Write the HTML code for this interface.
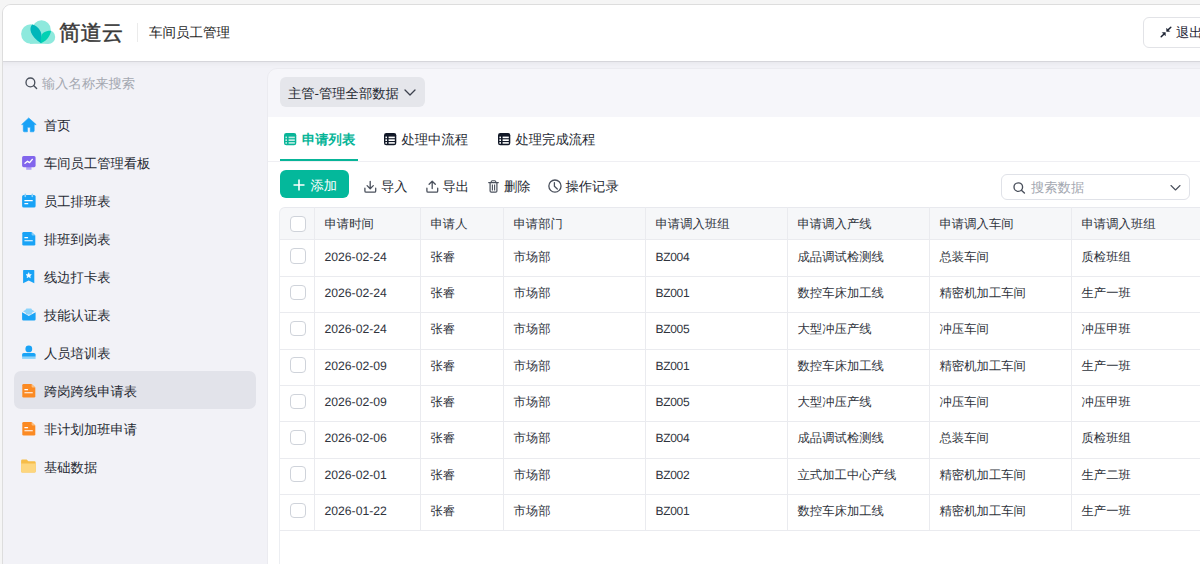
<!DOCTYPE html><html><head><meta charset="utf-8"><style>*{box-sizing:border-box;margin:0;padding:0}
html,body{width:1200px;height:564px;overflow:hidden;background:#f5f5f5;font-family:"Liberation Sans",sans-serif;color:#2a2f38;text-rendering:geometricPrecision}
.a{position:absolute}
.frame{position:absolute;left:2px;top:4px;width:1300px;height:700px;border:1px solid #dddddd;border-radius:9px;overflow:hidden;background:#f2f2f7}
.inner{position:absolute;left:-3px;top:-5px;width:1300px;height:700px}
.hdr{position:absolute;left:0;top:0;width:1300px;height:61px;background:#fff;box-shadow:0 1px 0 rgba(0,0,0,.075),0 2px 6px rgba(0,0,0,.06);z-index:3}
.side{position:absolute;left:0;top:61px;width:266px;height:700px;background:#f2f2f7}
.card{position:absolute;left:267px;top:68px;width:1100px;height:700px;background:#f6f6fa;border:1px solid #ebebf0;border-radius:10px}
.white{position:absolute;left:268px;top:117px;width:1100px;height:700px;background:#fff}
.tx{position:absolute;white-space:nowrap;line-height:20px}
.s13{font-size:13.3px}
.it{position:absolute;left:44px;font-size:13.3px;line-height:20px;color:#262a33;white-space:nowrap}
.ic{position:absolute;left:18px;width:22px;height:22px}
.tbl{position:absolute;left:0;top:0}
.thead{position:absolute;left:279px;top:207px;width:1000px;height:32px;background:#f6f7f9;border:1px solid #e8e9ee;border-left-color:#eceef2;border-bottom:none;border-top-left-radius:6px}
.hl{position:absolute;left:280px;width:1000px;height:1px;background:#eaebef}
.vl{position:absolute;width:1px;background:#eaebef}
.lb{position:absolute;left:279px;top:213px;width:1px;height:400px;background:#eceef2}
.cb{position:absolute;width:15.5px;height:15.5px;border:1px solid #cfd3da;border-radius:4px;background:#fff}
.th{font-size:12.35px;color:#30343d}
.td{font-size:12.35px;color:#30343d}
.num{letter-spacing:0;font-size:12.2px}
.bz{letter-spacing:-.3px;font-size:12px}
</style></head><body>
<div class="frame"><div class="inner">
 <div class="side"></div>
 <div class="card"></div>
 <div class="white"></div>
 
 <div class="hdr"></div>
</div></div>

<!-- header content -->
<svg class="a" style="left:18px;top:16px;z-index:5" width="40" height="32" viewBox="0 0 40 32">
  <circle cx="12.9" cy="18" r="9.8" fill="#8ee9dd"/>
  <circle cx="23.5" cy="13.5" r="9.2" fill="#8ee9dd"/>
  <circle cx="30.2" cy="21" r="7" fill="#8ee9dd"/>
  <rect x="12" y="17" width="18" height="10.8" fill="#8ee9dd"/>
  <path d="M14.2 8.5 C10.6 12 12 20 23 27.3 C23.8 22 23.8 18 22.6 15.6 C20.6 11.6 17.5 8.9 14.2 8.5 Z" fill="#00b6ba"/>
  <path d="M23 27.3 C22.5 23 22.8 19 25 17 C27 15.3 30 14.8 33 14.8 C32.5 19 29.5 24.5 23 27.3 Z" fill="#02d1b3"/>
</svg>
<div class="tx" style="left:59px;top:20px;font-size:21.4px;line-height:26px;color:#3a3a3a;-webkit-text-stroke:.45px #3a3a3a;z-index:5">简道云</div>
<div class="a" style="left:137px;top:23px;width:1px;height:19px;background:#ebebeb;z-index:5"></div>
<div class="tx s13" style="left:149px;top:23px;font-size:13.5px;color:#1f1f1f;z-index:5">车间员工管理</div>
<div class="a" style="left:1143px;top:17px;width:120px;height:31px;border:1px solid #e2e3e7;border-radius:6px;background:#fff;z-index:5"></div>
<svg class="a" style="left:1160px;top:26px;z-index:6" width="12" height="12" viewBox="0 0 12 12">
  <path d="M1.2 10.8 L3.8 8.2" stroke="#1c2333" stroke-width="1.5" stroke-linecap="round"/>
  <path d="M2.3 6.6 L5.4 6.6 L5.4 9.7 Z" fill="#1c2333" stroke="#1c2333" stroke-width=".5" stroke-linejoin="round"/>
  <path d="M10.8 1.2 L8.2 3.8" stroke="#1c2333" stroke-width="1.5" stroke-linecap="round"/>
  <path d="M6.6 2.3 L6.6 5.4 L9.7 5.4 Z" fill="#1c2333" stroke="#1c2333" stroke-width=".5" stroke-linejoin="round"/>
</svg>
<div class="tx s13" style="left:1176px;top:23px;color:#1c2333;z-index:6">退出</div>

<!-- sidebar -->
<svg class="a" style="left:25px;top:77px" width="13" height="13" viewBox="0 0 13 13">
  <circle cx="5.4" cy="5.4" r="4.4" fill="none" stroke="#4a505c" stroke-width="1.35"/>
  <path d="M8.6 8.6 L11.6 11.6" stroke="#4a505c" stroke-width="1.4" stroke-linecap="round"/>
</svg>
<div class="tx s13" style="left:42px;top:74px;color:#a4a8b1">输入名称来搜索</div>

<div class="a" style="left:14px;top:371px;width:242px;height:38px;background:#e2e3ea;border-radius:7px"></div>

<svg class="ic" style="top:114px" viewBox="0 0 22 22">
  <path d="M10.7 3.9 L18.2 10.6 L16.2 10.6 L16.2 16.8 Q16.2 17.8 15.2 17.8 L12.3 17.8 L12.3 13.3 L9.4 13.3 L9.4 17.8 L6.3 17.8 Q5.3 17.8 5.3 16.8 L5.3 10.6 L3.6 10.6 Z" fill="#1aa2f6" stroke="#1aa2f6" stroke-width=".6" stroke-linejoin="round"/>
</svg>
<div class="it" style="top:116px">首页</div>

<svg class="ic" style="top:152px" viewBox="0 0 22 22">
  <rect x="8.2" y="14.5" width="5.3" height="3.3" fill="#b3a3f7"/>
  <rect x="4.1" y="4.1" width="13.5" height="11.1" rx="1.6" fill="#8165ec"/>
  <path d="M7 11.3 L9.5 9.3 L11.6 10.6 L14.3 7.4" fill="none" stroke="#fff" stroke-width="1.4" stroke-linecap="round" stroke-linejoin="round"/>
</svg>
<div class="it" style="top:154px">车间员工管理看板</div>

<svg class="ic" style="top:190px" viewBox="0 0 22 22">
  <rect x="4.1" y="4.9" width="13.5" height="12.7" rx="1.6" fill="#19a3f6"/>
  <rect x="6.5" y="3.6" width="1.6" height="3.6" rx=".8" fill="#8fd3fb"/>
  <rect x="13.5" y="3.6" width="1.6" height="3.6" rx=".8" fill="#8fd3fb"/>
  <rect x="6.3" y="10.1" width="8.5" height="1.1" rx=".5" fill="#fff"/>
  <rect x="6.3" y="13.1" width="4" height="1.1" rx=".5" fill="#fff"/>
</svg>
<div class="it" style="top:192px">员工排班表</div>

<svg class="ic" style="top:228px" viewBox="0 0 22 22">
  <path d="M5.6 3.9 L13.6 3.9 L17.3 7.6 L17.3 16.3 Q17.3 17.6 16 17.6 L5.6 17.6 Q4.3 17.6 4.3 16.3 L4.3 5.2 Q4.3 3.9 5.6 3.9 Z" fill="#19a3f6"/>
  <path d="M13.6 3.9 L17.3 7.6 L14.6 7.6 Q13.6 7.6 13.6 6.6 Z" fill="#7fcdfb"/>
  <rect x="6.3" y="9.1" width="3.8" height="1.1" rx=".5" fill="#fff"/>
  <rect x="6.3" y="12.2" width="8.6" height="1.1" rx=".5" fill="#fff"/>
</svg>
<div class="it" style="top:230px">排班到岗表</div>

<svg class="ic" style="top:266px" viewBox="0 0 22 22">
  <path d="M5.1 4.6 Q5.1 3.9 5.8 3.9 L15.6 3.9 Q16.3 3.9 16.3 4.6 L16.3 17.2 L10.7 14.5 L5.1 17.2 Z" fill="#19a3f6"/>
  <path d="M10.7 6.6 L11.5 8.4 L13.4 8.6 L12 9.9 L12.4 11.8 L10.7 10.8 L9 11.8 L9.4 9.9 L8 8.6 L9.9 8.4 Z" fill="#fff" stroke="#fff" stroke-width=".5" stroke-linejoin="round"/>
</svg>
<div class="it" style="top:268px">线边打卡表</div>

<svg class="ic" style="top:304px" viewBox="0 0 22 22">
  <rect x="7.8" y="4.4" width="6" height="6" rx="1" fill="#8bd3fb"/>
  <path d="M4.1 8.3 L10.8 12 L17.6 8.3 L17.6 15.3 Q17.6 16.6 16.3 16.6 L5.4 16.6 Q4.1 16.6 4.1 15.3 Z" fill="#19a3f6"/>
  <path d="M5 7.2 L7.8 5.8 L13.8 5.8 L16.6 7.2 L10.8 10.6 Z" fill="#8bd3fb"/>
</svg>
<div class="it" style="top:306px">技能认证表</div>

<svg class="ic" style="top:342px" viewBox="0 0 22 22">
  <circle cx="10.8" cy="6.9" r="3.4" fill="#19a3f6"/>
  <path d="M4.1 12.6 Q4.1 10.9 5.8 10.9 L15.9 10.9 Q17.6 10.9 17.6 12.6 L17.6 14.8 L4.1 14.8 Z" fill="#19a3f6"/>
  <rect x="4.1" y="14.8" width="13.5" height="2.1" fill="#8bd3fb"/>
</svg>
<div class="it" style="top:344px">人员培训表</div>

<svg class="ic" style="top:380px" viewBox="0 0 22 22">
  <path d="M5.6 3.9 L13.6 3.9 L17.3 7.6 L17.3 16.3 Q17.3 17.6 16 17.6 L5.6 17.6 Q4.3 17.6 4.3 16.3 L4.3 5.2 Q4.3 3.9 5.6 3.9 Z" fill="#fb8a23"/>
  <path d="M13.6 3.9 L17.3 7.6 L14.6 7.6 Q13.6 7.6 13.6 6.6 Z" fill="#fdc080"/>
  <rect x="6.3" y="9.1" width="3.8" height="1.1" rx=".5" fill="#fff"/>
  <rect x="6.3" y="12.2" width="8.6" height="1.1" rx=".5" fill="#fff"/>
</svg>
<div class="it" style="top:382px">跨岗跨线申请表</div>

<svg class="ic" style="top:418px" viewBox="0 0 22 22">
  <path d="M5.6 3.9 L13.6 3.9 L17.3 7.6 L17.3 16.3 Q17.3 17.6 16 17.6 L5.6 17.6 Q4.3 17.6 4.3 16.3 L4.3 5.2 Q4.3 3.9 5.6 3.9 Z" fill="#fb8a23"/>
  <path d="M13.6 3.9 L17.3 7.6 L14.6 7.6 Q13.6 7.6 13.6 6.6 Z" fill="#fdc080"/>
  <rect x="6.3" y="9.1" width="3.8" height="1.1" rx=".5" fill="#fff"/>
  <rect x="6.3" y="12.2" width="8.6" height="1.1" rx=".5" fill="#fff"/>
</svg>
<div class="it" style="top:420px">非计划加班申请</div>

<svg class="ic" style="top:456px" viewBox="0 0 22 22">
  <path d="M4.4 3.5 L8.6 3.5 L10.4 5.2 L16.4 5.2 Q17.7 5.2 17.7 6.5 L17.7 15.2 Q17.7 16.5 16.4 16.5 L4.4 16.5 Q3.1 16.5 3.1 15.2 L3.1 4.8 Q3.1 3.5 4.4 3.5 Z" fill="#f6bd48"/>
  <path d="M3.1 7.6 L17.7 7.6 L17.7 15.2 Q17.7 16.5 16.4 16.5 L4.4 16.5 Q3.1 16.5 3.1 15.2 Z" fill="#fdd67e"/>
</svg>
<div class="it" style="top:458px">基础数据</div>

<!-- main top -->
<div class="a" style="left:280px;top:77px;width:145px;height:30px;background:#e5e6eb;border-radius:6px"></div>
<div class="tx s13" style="left:288px;top:84px;color:#262a33">主管-管理全部数据</div>
<svg class="a" style="left:404px;top:88px" width="12" height="9" viewBox="0 0 12 9">
  <path d="M1 2 L6 7 L11 2" fill="none" stroke="#3c414d" stroke-width="1.3" stroke-linecap="round" stroke-linejoin="round"/>
</svg>

<!-- tabs -->
<svg class="a" style="left:284px;top:132.8px" width="13" height="13" viewBox="0 0 13 13">
  <rect x="0" y="0" width="12.3" height="12.2" rx="2.3" fill="#08b598"/>
  <rect x="1.4" y="3.6" width="1.6" height="1.6" fill="rgba(255,255,255,.75)"/><rect x="4.6" y="3.6" width="6.2" height="1.6" fill="rgba(255,255,255,.75)"/>
  <rect x="1.4" y="6.3" width="1.6" height="1.7" fill="rgba(255,255,255,.75)"/><rect x="4.6" y="6.3" width="6.2" height="1.7" fill="rgba(255,255,255,.75)"/>
  <rect x="1.4" y="9.1" width="1.6" height="1.6" fill="rgba(255,255,255,.75)"/><rect x="4.6" y="9.1" width="6.2" height="1.6" fill="rgba(255,255,255,.75)"/>
</svg>
<div class="tx" style="left:302px;top:130px;font-size:13.3px;font-weight:bold;color:#08b598">申请列表</div>
<svg class="a" style="left:384.3px;top:132.9px" width="13" height="13" viewBox="0 0 13 13">
  <rect x="0" y="0" width="12.3" height="12.2" rx="2.3" fill="#111827"/>
  <rect x="1.4" y="3.6" width="1.6" height="1.6" fill="#fff"/><rect x="4.6" y="3.6" width="6.2" height="1.6" fill="#fff"/>
  <rect x="1.4" y="6.3" width="1.6" height="1.7" fill="#fff"/><rect x="4.6" y="6.3" width="6.2" height="1.7" fill="#fff"/>
  <rect x="1.4" y="9.1" width="1.6" height="1.6" fill="#fff"/><rect x="4.6" y="9.1" width="6.2" height="1.6" fill="#fff"/>
</svg>
<div class="tx s13" style="left:401.5px;top:130px;color:#262a33">处理中流程</div>
<svg class="a" style="left:498px;top:132.9px" width="13" height="13" viewBox="0 0 13 13">
  <rect x="0" y="0" width="12.3" height="12.2" rx="2.3" fill="#111827"/>
  <rect x="1.4" y="3.6" width="1.6" height="1.6" fill="#fff"/><rect x="4.6" y="3.6" width="6.2" height="1.6" fill="#fff"/>
  <rect x="1.4" y="6.3" width="1.6" height="1.7" fill="#fff"/><rect x="4.6" y="6.3" width="6.2" height="1.7" fill="#fff"/>
  <rect x="1.4" y="9.1" width="1.6" height="1.6" fill="#fff"/><rect x="4.6" y="9.1" width="6.2" height="1.6" fill="#fff"/>
</svg>
<div class="tx s13" style="left:515.5px;top:130px;color:#262a33">处理完成流程</div>
<div class="a" style="left:268px;top:161px;width:1000px;height:1px;background:#efeff3"></div>
<div class="a" style="left:280px;top:159px;width:78px;height:2px;background:#08b598"></div>

<!-- toolbar -->
<div class="a" style="left:280px;top:169.6px;width:69px;height:28.9px;background:#04b89b;border-radius:6px"></div>
<svg class="a" style="left:293px;top:178.5px" width="12" height="12" viewBox="0 0 12 12">
  <path d="M6 .5 V11.5 M.5 6 H11.5" stroke="#fff" stroke-width="1.6"/>
</svg>
<div class="tx s13" style="left:310.5px;top:176px;color:#fff">添加</div>

<svg class="a" style="left:364px;top:180px" width="13" height="13" viewBox="0 0 13 13">
  <path d="M6.2 1.3 V8.6 M3.1 5.6 L6.2 8.7 L9.3 5.6" fill="none" stroke="#4a505c" stroke-width="1.3" stroke-linecap="round" stroke-linejoin="round"/>
  <path d="M.9 8.2 V10.9 Q.9 12.1 2.1 12.1 H10.5 Q11.7 12.1 11.7 10.9 V8.2" fill="none" stroke="#4a505c" stroke-width="1.3" stroke-linecap="round" stroke-linejoin="round"/>
</svg>
<div class="tx s13" style="left:381px;top:177px;color:#262a33">导入</div>
<svg class="a" style="left:426px;top:180px" width="13" height="13" viewBox="0 0 13 13">
  <path d="M6.2 1.4 V8.6 M3.1 4.3 L6.2 1.2 L9.3 4.3" fill="none" stroke="#4a505c" stroke-width="1.3" stroke-linecap="round" stroke-linejoin="round"/>
  <path d="M.9 8.2 V10.9 Q.9 12.1 2.1 12.1 H10.5 Q11.7 12.1 11.7 10.9 V8.2" fill="none" stroke="#4a505c" stroke-width="1.3" stroke-linecap="round" stroke-linejoin="round"/>
</svg>
<div class="tx s13" style="left:442.5px;top:177px;color:#262a33">导出</div>
<svg class="a" style="left:487.5px;top:179.5px" width="11" height="13" viewBox="0 0 11 13">
  <path d="M.7 2.6 H10.3" fill="none" stroke="#4a505c" stroke-width="1.2" stroke-linecap="round"/>
  <path d="M3.2 2.4 V1.7 Q3.2 .7 4.2 .7 H6.8 Q7.8 .7 7.8 1.7 V2.4" fill="none" stroke="#4a505c" stroke-width="1.1"/>
  <path d="M2.1 2.8 V11 Q2.1 12.2 3.3 12.2 H7.7 Q8.9 12.2 8.9 11 V2.8" fill="none" stroke="#4a505c" stroke-width="1.2"/>
  <path d="M4.4 4.5 V10.4 M6.6 4.5 V10.4" stroke="#4a505c" stroke-width="1.1"/>
</svg>
<div class="tx s13" style="left:504px;top:177px;color:#262a33">删除</div>
<svg class="a" style="left:548px;top:179px" width="14" height="14" viewBox="0 0 14 14">
  <circle cx="6.95" cy="7.1" r="6.1" fill="none" stroke="#4a505c" stroke-width="1.3"/>
  <path d="M6.4 3.6 V7.3 L9.3 10" fill="none" stroke="#4a505c" stroke-width="1.3" stroke-linecap="round" stroke-linejoin="round"/>
</svg>
<div class="tx s13" style="left:565.5px;top:177px;color:#262a33">操作记录</div>

<div class="a" style="left:1001px;top:174px;width:189px;height:26px;border:1px solid #e0e2e8;border-radius:6px;background:#fff"></div>
<svg class="a" style="left:1013px;top:181.5px" width="13" height="12" viewBox="0 0 13 12">
  <circle cx="5.3" cy="5.1" r="4.3" fill="none" stroke="#4a505c" stroke-width="1.35"/>
  <path d="M8.4 8.2 L11.4 11.1" stroke="#4a505c" stroke-width="1.4" stroke-linecap="round"/>
</svg>
<div class="tx s13" style="left:1031px;top:177.5px;color:#a4a8b1">搜索数据</div>
<svg class="a" style="left:1170px;top:184px" width="11" height="8" viewBox="0 0 11 8">
  <path d="M1 1.5 L5.5 6 L10 1.5" fill="none" stroke="#4a505c" stroke-width="1.1" stroke-linecap="round" stroke-linejoin="round"/>
</svg>

<div class="tbl">
<div class="thead"></div><div class="lb"></div>
<div class="hl" style="top:239.0px"></div>
<div class="hl" style="top:276.1px"></div>
<div class="hl" style="top:312.4px"></div>
<div class="hl" style="top:348.7px"></div>
<div class="hl" style="top:385.0px"></div>
<div class="hl" style="top:421.4px"></div>
<div class="hl" style="top:457.7px"></div>
<div class="hl" style="top:494.0px"></div>
<div class="hl" style="top:530.3px"></div>
<div class="vl" style="left:314.0px;top:207px;height:323.3px"></div>
<div class="vl" style="left:420.0px;top:207px;height:323.3px"></div>
<div class="vl" style="left:503.0px;top:207px;height:323.3px"></div>
<div class="vl" style="left:645.0px;top:207px;height:323.3px"></div>
<div class="vl" style="left:787.0px;top:207px;height:323.3px"></div>
<div class="vl" style="left:929.0px;top:207px;height:323.3px"></div>
<div class="vl" style="left:1071.0px;top:207px;height:323.3px"></div>
<div class="vl" style="left:1213.0px;top:207px;height:323.3px"></div>
<div class="cb" style="left:290px;top:216px"></div>
<div class="tx th" style="left:324.5px;top:214px">申请时间</div>
<div class="tx th" style="left:430.5px;top:214px">申请人</div>
<div class="tx th" style="left:513.5px;top:214px">申请部门</div>
<div class="tx th" style="left:655.5px;top:214px">申请调入班组</div>
<div class="tx th" style="left:797.5px;top:214px">申请调入产线</div>
<div class="tx th" style="left:939.5px;top:214px">申请调入车间</div>
<div class="tx th" style="left:1081.5px;top:214px">申请调入班组</div>
<div class="cb" style="left:290px;top:248.3px"></div>
<div class="tx td num" style="left:324.5px;top:246.6px">2026-02-24</div>
<div class="tx td" style="left:430.5px;top:246.6px">张睿</div>
<div class="tx td" style="left:513.5px;top:246.6px">市场部</div>
<div class="tx td bz" style="left:655.5px;top:246.6px">BZ004</div>
<div class="tx td" style="left:797.5px;top:246.6px">成品调试检测线</div>
<div class="tx td" style="left:939.5px;top:246.6px">总装车间</div>
<div class="tx td" style="left:1081.5px;top:246.6px">质检班组</div>
<div class="cb" style="left:290px;top:284.6px"></div>
<div class="tx td num" style="left:324.5px;top:282.9px">2026-02-24</div>
<div class="tx td" style="left:430.5px;top:282.9px">张睿</div>
<div class="tx td" style="left:513.5px;top:282.9px">市场部</div>
<div class="tx td bz" style="left:655.5px;top:282.9px">BZ001</div>
<div class="tx td" style="left:797.5px;top:282.9px">数控车床加工线</div>
<div class="tx td" style="left:939.5px;top:282.9px">精密机加工车间</div>
<div class="tx td" style="left:1081.5px;top:282.9px">生产一班</div>
<div class="cb" style="left:290px;top:320.9px"></div>
<div class="tx td num" style="left:324.5px;top:319.2px">2026-02-24</div>
<div class="tx td" style="left:430.5px;top:319.2px">张睿</div>
<div class="tx td" style="left:513.5px;top:319.2px">市场部</div>
<div class="tx td bz" style="left:655.5px;top:319.2px">BZ005</div>
<div class="tx td" style="left:797.5px;top:319.2px">大型冲压产线</div>
<div class="tx td" style="left:939.5px;top:319.2px">冲压车间</div>
<div class="tx td" style="left:1081.5px;top:319.2px">冲压甲班</div>
<div class="cb" style="left:290px;top:357.2px"></div>
<div class="tx td num" style="left:324.5px;top:355.5px">2026-02-09</div>
<div class="tx td" style="left:430.5px;top:355.5px">张睿</div>
<div class="tx td" style="left:513.5px;top:355.5px">市场部</div>
<div class="tx td bz" style="left:655.5px;top:355.5px">BZ001</div>
<div class="tx td" style="left:797.5px;top:355.5px">数控车床加工线</div>
<div class="tx td" style="left:939.5px;top:355.5px">精密机加工车间</div>
<div class="tx td" style="left:1081.5px;top:355.5px">生产一班</div>
<div class="cb" style="left:290px;top:393.5px"></div>
<div class="tx td num" style="left:324.5px;top:391.8px">2026-02-09</div>
<div class="tx td" style="left:430.5px;top:391.8px">张睿</div>
<div class="tx td" style="left:513.5px;top:391.8px">市场部</div>
<div class="tx td bz" style="left:655.5px;top:391.8px">BZ005</div>
<div class="tx td" style="left:797.5px;top:391.8px">大型冲压产线</div>
<div class="tx td" style="left:939.5px;top:391.8px">冲压车间</div>
<div class="tx td" style="left:1081.5px;top:391.8px">冲压甲班</div>
<div class="cb" style="left:290px;top:429.9px"></div>
<div class="tx td num" style="left:324.5px;top:428.2px">2026-02-06</div>
<div class="tx td" style="left:430.5px;top:428.2px">张睿</div>
<div class="tx td" style="left:513.5px;top:428.2px">市场部</div>
<div class="tx td bz" style="left:655.5px;top:428.2px">BZ004</div>
<div class="tx td" style="left:797.5px;top:428.2px">成品调试检测线</div>
<div class="tx td" style="left:939.5px;top:428.2px">总装车间</div>
<div class="tx td" style="left:1081.5px;top:428.2px">质检班组</div>
<div class="cb" style="left:290px;top:466.2px"></div>
<div class="tx td num" style="left:324.5px;top:464.5px">2026-02-01</div>
<div class="tx td" style="left:430.5px;top:464.5px">张睿</div>
<div class="tx td" style="left:513.5px;top:464.5px">市场部</div>
<div class="tx td bz" style="left:655.5px;top:464.5px">BZ002</div>
<div class="tx td" style="left:797.5px;top:464.5px">立式加工中心产线</div>
<div class="tx td" style="left:939.5px;top:464.5px">精密机加工车间</div>
<div class="tx td" style="left:1081.5px;top:464.5px">生产二班</div>
<div class="cb" style="left:290px;top:502.5px"></div>
<div class="tx td num" style="left:324.5px;top:500.8px">2026-01-22</div>
<div class="tx td" style="left:430.5px;top:500.8px">张睿</div>
<div class="tx td" style="left:513.5px;top:500.8px">市场部</div>
<div class="tx td bz" style="left:655.5px;top:500.8px">BZ001</div>
<div class="tx td" style="left:797.5px;top:500.8px">数控车床加工线</div>
<div class="tx td" style="left:939.5px;top:500.8px">精密机加工车间</div>
<div class="tx td" style="left:1081.5px;top:500.8px">生产一班</div>
</div>
</body></html>
